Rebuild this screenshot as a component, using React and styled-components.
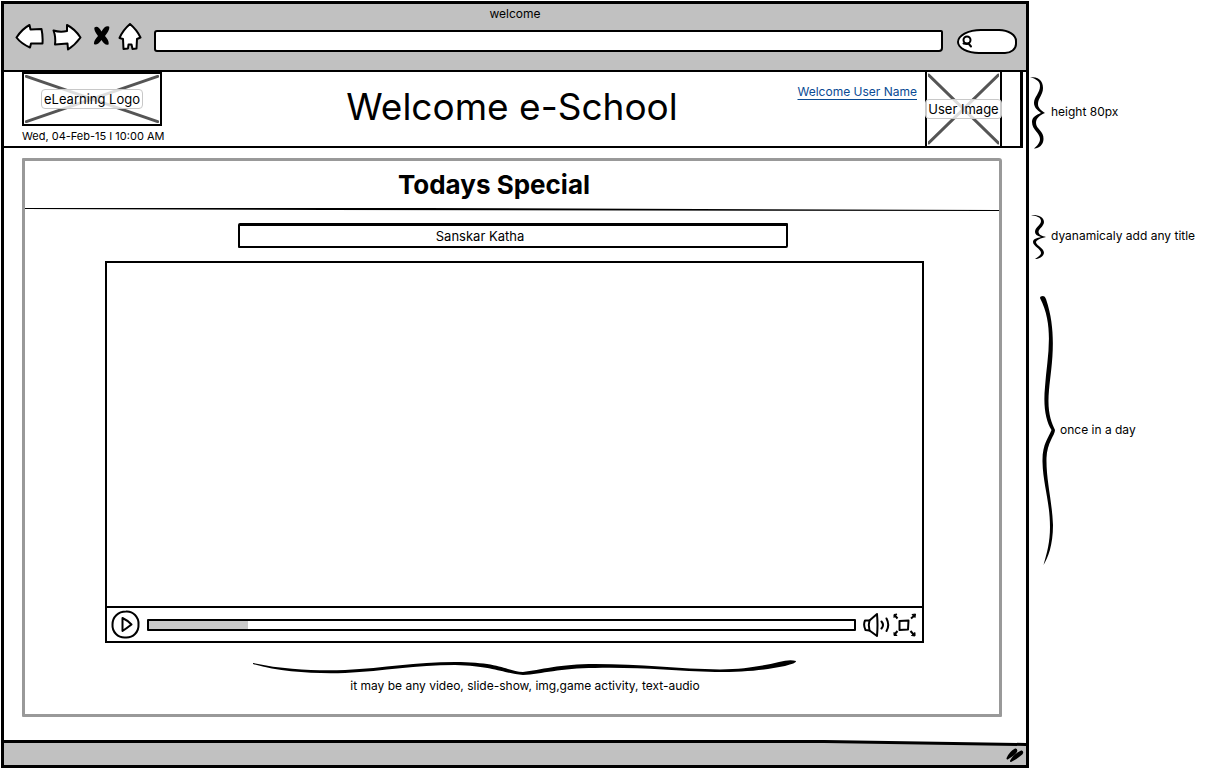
import React from "react";
import styled, { createGlobalStyle } from "styled-components";

const GlobalStyle = createGlobalStyle`
  * { box-sizing: border-box; }
  body { margin: 0; background: #fff; color: #000; font: 12px/16px Inter, sans-serif; }
  h1, h2, p { margin: 0; }
  svg { display: block; flex: none; }
`;

const Page = styled.div`
  display: grid;
  grid-template-columns: minmax(0, 1fr) 191px;
  align-items: start;
  padding: 1px 0 0 1px;
`;

const Browser = styled.div`
  border: 3px solid #000;
`;

const Chrome = styled.header`
  background: #c1c1c1;
  border-bottom: 2px solid #000;
  padding-bottom: 11px;
`;

const WindowTitle = styled.p`
  text-align: center;
  line-height: 19px;
`;

const Toolbar = styled.div`
  display: flex;
  align-items: center;
  padding: 0 9px 0 11px;
`;

const NavButtons = styled.nav`
  display: flex;
  gap: 8px;
  padding-bottom: 8px;
  margin-right: 12px;
`;

const IconButton = styled.button`
  flex: none;
  padding: 0;
  border: 0;
  background: none;
  cursor: pointer;
`;

const AddressInput = styled.input`
  flex: 1;
  min-width: 0;
  height: 22px;
  padding: 0 8px;
  border: 2px solid #000;
  border-radius: 3px 2px 4px 3px;
  background: #fff;
  font: inherit;
`;

const SearchBox = styled.label`
  display: flex;
  align-items: center;
  width: 60px;
  height: 25px;
  margin-left: 14px;
  padding-left: 3px;
  border: 2px solid #000;
  border-radius: 24px 18px 12px 22px / 13px 12px 10px 12px;
  background: #fff;
`;

const SearchInput = styled.input`
  flex: 1;
  min-width: 0;
  border: 0;
  outline: 0;
  background: none;
  font: inherit;
`;

const SiteHeader = styled.section`
  display: grid;
  grid-template-columns: 1fr auto 1fr;
  margin-right: 3px;
  padding: 0 18px;
  border: solid #000;
  border-width: 0 3px 2px 0;
`;

const Brand = styled.div`
  display: flex;
  flex-direction: column;
`;

const Placeholder = styled.div`
  position: relative;
  display: flex;
  align-items: center;
  justify-content: center;
  width: ${(p) => p.$width};
  height: ${(p) => p.$height};
  border: solid #000;
  border-width: ${(p) => p.$border};
`;

const Cross = styled.svg`
  position: absolute;
  inset: 1px;
  width: calc(100% - 2px);
  height: calc(100% - 2px);
  stroke: #555;
  stroke-width: 3;
  stroke-linecap: round;
`;

const PlaceholderLabel = styled.span`
  position: relative;
  flex: none;
  padding: 1px 2px;
  border: 1px solid #c8c8c8;
  border-radius: 4px;
  background: rgba(255, 255, 255, 0.8);
  font-size: 13px;
  white-space: nowrap;
`;

const DateLine = styled.time`
  font-size: 11px;
  line-height: 20px;
  white-space: nowrap;
`;

const SiteTitle = styled.h1`
  font-size: 37px;
  font-weight: 400;
  line-height: 70px;
  white-space: nowrap;
`;

const UserArea = styled.div`
  display: flex;
  justify-content: flex-end;
  gap: 8px;
`;

const UserLink = styled.a`
  margin-top: 12px;
  font-size: 12px;
  color: #0a4b94;
  text-underline-offset: 3px;
  white-space: nowrap;
`;

const Panel = styled.main`
  margin: 10px 24px 23px 18px;
  border: 3px solid #999;
  border-radius: 1px 3px 1px 1px;
`;

const PanelHeading = styled.h2`
  padding-right: 36px;
  text-align: center;
  font-size: 26px;
  font-weight: 700;
  line-height: 47px;
`;

const Rule = styled.svg`
  width: 100%;
  height: ${(p) => p.$height};
`;

const TopicTitle = styled.p`
  margin: 11px 211px 13px 213px;
  padding-right: 66px;
  border: 2px solid #000;
  border-top-width: 3px;
  border-radius: 2px 1px 2px 1px;
  text-align: center;
  font-size: 13px;
  line-height: 20px;
`;

const Player = styled.section`
  margin: 0 75px 0 80px;
  border: 2px solid #000;
`;

const Stage = styled.div`
  height: 343px;
`;

const Controls = styled.div`
  display: flex;
  align-items: center;
  gap: 7px;
  padding: 2px 4px;
  border-top: 2px solid #000;
`;

const SeekBar = styled.input`
  flex: 1;
  min-width: 0;
  height: 12px;
  margin: 0;
  appearance: none;
  border: 2px solid #000;
  border-radius: 1px;
  background: linear-gradient(to right, #c9c9c9 ${(p) => p.$played}%, #fff ${(p) => p.$played}%);
  &::-webkit-slider-thumb { appearance: none; width: 1px; height: 8px; opacity: 0; }
`;

const ControlGroup = styled.div`
  display: flex;
  gap: 2px;
`;

const MediaNote = styled.figure`
  margin: 17px 202px 20px 228px;
`;

const MediaCaption = styled.figcaption`
  padding-top: 2px;
  text-align: center;
  white-space: nowrap;
`;

const StatusBar = styled.footer`
  display: flex;
  justify-content: flex-end;
  padding: 2px 2px 1px 0;
  background: #c1c1c1;
`;

const Notes = styled.aside`
  padding-top: 75px;
`;

const Note = styled.div`
  display: flex;
  align-items: center;
  gap: 3px;
  margin-bottom: ${(p) => p.$after};
  padding-left: ${(p) => p.$inset};
  white-space: nowrap;
`;

const NoteText = styled.p`
  padding-bottom: 2px;
`;

const outline = { fill: "#fff", stroke: "#000", strokeWidth: 2, strokeLinejoin: "round", strokeLinecap: "round" };

const BackIcon = () => (
  <svg width="29" height="28" viewBox="15 23 29 28" {...outline}>
    <path d="M16.500 37.500Q22 29 29.500 25L30.500 29.500Q36 29 41.500 29Q43 36 42.500 43.500L31 43.500L30 47.500Q21 43.500 16.500 37.500Z" />
  </svg>
);

const ForwardIcon = () => (
  <svg width="30" height="28" viewBox="52 23 30 28" {...outline}>
    <path d="M53.500 30.500Q60 32.500 67 31L67 25Q75 29 80.500 37.500Q75 45 68 49.500L67.500 43.500Q61 44 55 44.500Q56 37 53.500 30.500Z" />
  </svg>
);

const StopIcon = () => (
  <svg width="20" height="28" viewBox="90 23 20 28" fill="#000">
    <path d="M94.500 27.500Q98 25 101.500 31.500Q105 25 109 26.500Q110.500 29 105 36Q109.500 41 108.500 44.500Q105 46 101.500 40Q97 46 94 44Q93.500 41 98 36Q93.500 30 94.500 27.500Z" />
  </svg>
);

const HomeIcon = () => (
  <svg width="24" height="28" viewBox="118 23 24 28" {...outline}>
    <path d="M130 24Q137 30 140.500 37.500L137 39L136.500 48.500L132.500 49L131.500 44.500L128.500 44.500L128 48.500L123.500 49L123 39L119.500 38Q123 30 130 24Z" />
  </svg>
);

const SearchIcon = () => (
  <svg width="13" height="14" viewBox="0 0 13 14" fill="none" stroke="#000" strokeWidth="2" strokeLinecap="round">
    <ellipse cx="5" cy="6" rx="3.500" ry="3.500" />
    <path d="M6.500 9.500L9 12.500M1.500 9.500L5 10" />
  </svg>
);

const PlayIcon = () => (
  <svg width="29" height="29" viewBox="0 0 29 29" {...outline}>
    <path d="M15 1.500C22 1 28 7 27.500 14.500C28 22 22 28 14.500 27.500C7 28 1 22 1.500 14.500C1.500 7 7 1.500 15 1.500Z" />
    <path d="M11.500 8Q16 10 20.500 14.500Q16 18 11.500 21Z" />
  </svg>
);

const VolumeIcon = () => (
  <svg width="27" height="26" viewBox="862 612 27 26" {...outline}>
    <path d="M864 620.500L868.500 620.500L876 614Q877 625 876 636L868.500 630.500L864.500 630Q862 625 864 620.500Z" />
    <path d="M868.500 620.500Q867 625 868.500 630.500" />
    <path d="M880.500 621.500Q883.500 625 880.500 628.500M885.500 618.500Q889 625 885.500 631" fill="none" />
  </svg>
);

const FullscreenIcon = () => (
  <svg width="26" height="26" viewBox="892 612 26 26" fill="#000" stroke="#000" strokeWidth="2" strokeLinejoin="round">
    <path d="M899.500 621L908.500 620.500L908 629.500L899.500 630Z" fill="#fff" />
    <path d="M897.500 618.500L894.500 615M911 618.500L914.500 615.500M897.500 631L894.500 634.500M910.500 631L914.500 635.500" />
    <path d="M894 617.500L894 614.500L897 614ZM912 614.500L915.500 614L915 617.500ZM894 632.500L894 635.500L897 635.500ZM915 632.500L915 636L911.500 635.500Z" strokeWidth="1" />
  </svg>
);

const GripIcon = () => (
  <svg width="20" height="16" viewBox="1005 749 20 16">
    <path d="M1008.500 759.500Q1011 753.500 1016.500 750.500Q1020 752 1008.500 759.500ZM1012 762Q1015 756 1022.500 752.500Q1026 754 1012 762Z" stroke="#000" strokeWidth="2" strokeLinejoin="round" />
  </svg>
);

const HeaderBrace = () => (
  <svg width="18" height="74" viewBox="1030 76 18 74">
    <path d="M1030 77C1038 77 1043 80 1043 88C1043 95 1038 98 1038 104C1038 108 1041 110 1045 113C1040 115 1036 118 1036 123C1036 129 1044 131 1043.500 139C1043.500 145 1038 149 1034 148.500C1037 146 1040 143 1040 139C1040 133 1032 130 1032 122C1032 117 1036 115 1041 113C1037 110 1034 107 1034 103C1034 97 1040 93 1040 86C1040 81 1036 79 1030 77Z" />
  </svg>
);

const TitleBrace = () => (
  <svg width="18" height="46" viewBox="1030 214 18 46">
    <path d="M1031 215C1038 214.500 1044 217 1044 222C1044 226 1038.500 229 1038.500 232C1039 235 1042 236 1046 237C1041 238 1036 240 1036 242.500C1037 246 1044 248 1044 253C1043 257 1039 259 1035 259C1038 257 1041 255 1041 253C1041 249 1033 246 1033 242C1033 239 1037 238 1041 237C1037 236 1035 234 1035 232C1035 227 1041 225 1041 221C1041 217 1036 216 1031 215Z" />
  </svg>
);

const MediaBrace = () => (
  <svg width="18" height="270" viewBox="1039 296 18 270">
    <path d="M1040 298Q1040 296 1043 296Q1045 296 1046 299C1058 334 1051 368 1049 390C1047 412 1051 421 1055 430C1055 435 1047 443 1046.500 458C1046 480 1052 500 1053 525C1053 545 1048 558 1043.500 565C1047 553 1050 542 1050 527C1050 502 1043 484 1042.500 462C1042 444 1049 437 1051.500 430C1046 421 1043 407 1045 387C1047 358 1055 327 1040 298Z" />
  </svg>
);

const WideBrace = () => (
  <svg width="100%" height="16" viewBox="253 660 544 16" preserveAspectRatio="none">
    <path d="M253 663C285 670 320 671 345 670C385 668 415 662 455 662C500 662 507 671 523 672C540 670 560 664 595 664C640 664 680 669 720 669.500C745 669 762 666 779 662Q790 659 796 661Q797 663 785 666C765 670 745 672 715 672C675 671 640 667 595 668C560 668 542 674 523 675C505 674 495 666 455 665C415 665 385 671 345 673C315 674 280 672 253 664Z" />
  </svg>
);

function ImagePlaceholder({ label, width, height, border }) {
  return (
    <Placeholder $width={width} $height={height} $border={border}>
      <Cross aria-hidden="true">
        <line x1="1%" y1="3%" x2="99%" y2="97%" />
        <line x1="99%" y1="3%" x2="1%" y2="97%" />
      </Cross>
      <PlaceholderLabel>{label}</PlaceholderLabel>
    </Placeholder>
  );
}

export default function App() {
  return (
    <>
      <GlobalStyle />
      <Page>
        <Browser>
          <Chrome>
            <WindowTitle>welcome</WindowTitle>
            <Toolbar>
              <NavButtons>
                <IconButton aria-label="Back"><BackIcon /></IconButton>
                <IconButton aria-label="Forward"><ForwardIcon /></IconButton>
                <IconButton aria-label="Stop"><StopIcon /></IconButton>
                <IconButton aria-label="Home"><HomeIcon /></IconButton>
              </NavButtons>
              <AddressInput aria-label="Address" />
              <SearchBox>
                <SearchIcon />
                <SearchInput aria-label="Search" />
              </SearchBox>
            </Toolbar>
          </Chrome>

          <SiteHeader>
            <Brand>
              <ImagePlaceholder label="eLearning Logo" width="140px" height="54px" border="2px" />
              <DateLine dateTime="2015-02-04T10:00">Wed, 04-Feb-15 I 10:00 AM</DateLine>
            </Brand>
            <SiteTitle>Welcome e-School</SiteTitle>
            <UserArea>
              <UserLink href="#user">Welcome User Name</UserLink>
              <ImagePlaceholder label="User Image" width="77px" height="100%" border="0 2px" />
            </UserArea>
          </SiteHeader>

          <Panel>
            <PanelHeading>Todays Special</PanelHeading>
            <Rule $height="4px" viewBox="0 0 974 4" preserveAspectRatio="none" aria-hidden="true">
              <path d="M0 0L400 0L974 2L974 3L300 2L0 1Z" />
            </Rule>
            <TopicTitle>Sanskar Katha</TopicTitle>
            <Player aria-label="Media player">
              <Stage />
              <Controls>
                <IconButton aria-label="Play"><PlayIcon /></IconButton>
                <SeekBar type="range" aria-label="Seek" min="0" max="100" defaultValue="14" $played={14} />
                <ControlGroup>
                  <IconButton aria-label="Volume"><VolumeIcon /></IconButton>
                  <IconButton aria-label="Full screen"><FullscreenIcon /></IconButton>
                </ControlGroup>
              </Controls>
            </Player>
            <MediaNote>
              <WideBrace />
              <MediaCaption>it may be any video, slide-show, img,game activity, text-audio</MediaCaption>
            </MediaNote>
          </Panel>

          <Rule $height="6px" viewBox="0 0 1022 6" preserveAspectRatio="none" aria-hidden="true">
            <path d="M0 2L820 2L1022 5L1022 6L0 6Z" fill="#c1c1c1" />
            <path d="M0 0L820 0L1022 3L1022 6L820 3L0 3Z" />
          </Rule>
          <StatusBar><GripIcon /></StatusBar>
        </Browser>

        <Notes>
          <Note $after="64px" $inset="1px"><HeaderBrace /><NoteText>height 80px</NoteText></Note>
          <Note $after="36px" $inset="1px"><TitleBrace /><NoteText>dyanamicaly add any title</NoteText></Note>
          <Note $after="0" $inset="10px"><MediaBrace /><NoteText>once in a day</NoteText></Note>
        </Notes>
      </Page>
    </>
  );
}
